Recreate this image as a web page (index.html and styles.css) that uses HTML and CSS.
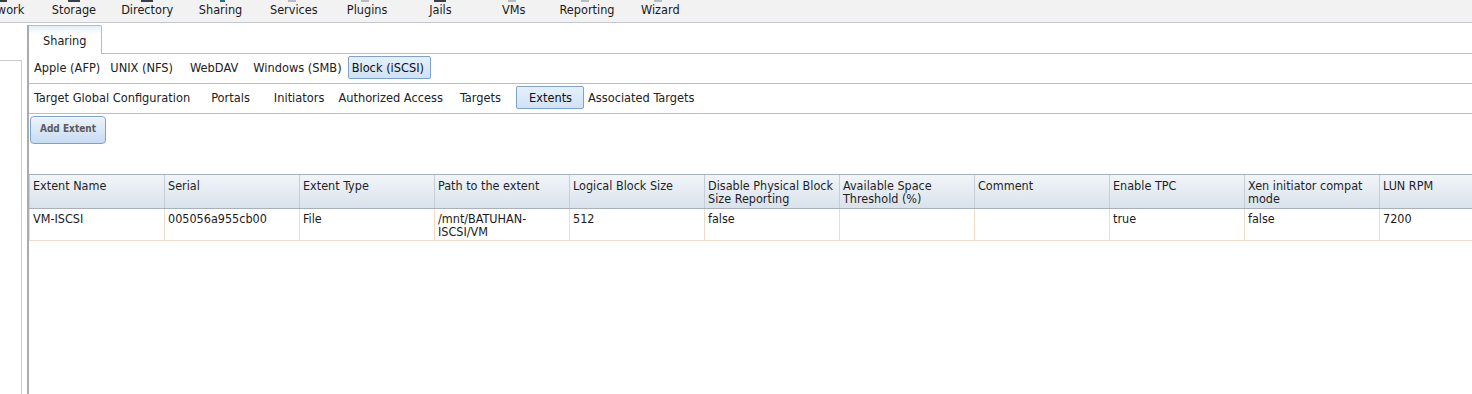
FILE: index.html
```html
<!DOCTYPE html>
<html>
<head>
<meta charset="utf-8">
<link rel="stylesheet" href="styles.css">
</head>
<body>
<div class="topnav">
  <div class="nav-item"><span class="ico ico-dark"></span>Network</div>
  <div class="nav-item"><span class="ico ico-dark"></span>Storage</div>
  <div class="nav-item"><span class="ico ico-dark"></span>Directory</div>
  <div class="nav-item"><span class="ico ico-teal"></span>Sharing</div>
  <div class="nav-item"><span class="ico ico-gray"></span>Services</div>
  <div class="nav-item"><span class="ico ico-gray"></span>Plugins</div>
  <div class="nav-item"><span class="ico ico-dark"></span>Jails</div>
  <div class="nav-item"><span class="ico ico-gray"></span>VMs</div>
  <div class="nav-item"><span class="ico ico-gray"></span>Reporting</div>
  <div class="nav-item"><span class="ico ico-gray"></span>Wizard</div>
</div>
<div class="layout">
  <div class="leftpane"></div>
  <div class="main">
    <div class="tabrow">
      <div class="tab">Sharing</div>
      <div class="tabfill"></div>
    </div>
    <div class="subrow">
      <span class="sub a1">Apple (AFP)</span>
      <span class="sub a2">UNIX (NFS)</span>
      <span class="sub a3">WebDAV</span>
      <span class="sub a4">Windows (SMB)</span>
      <span class="sub sel a5">Block (iSCSI)</span>
    </div>
    <div class="subrow">
      <span class="sub sp1">Target Global Configuration</span>
      <span class="sub sp2">Portals</span>
      <span class="sub sp3">Initiators</span>
      <span class="sub sp4">Authorized Access</span>
      <span class="sub sp5">Targets</span>
      <span class="sub sel sp6">Extents</span>
      <span class="sub">Associated Targets</span>
    </div>
    <div class="toolbar">
      <button class="btn">Add Extent</button>
    </div>
    <div class="grid">
      <div class="grow ghead">
        <div class="gc">Extent Name</div>
        <div class="gc">Serial</div>
        <div class="gc">Extent Type</div>
        <div class="gc">Path to the extent</div>
        <div class="gc">Logical Block Size</div>
        <div class="gc">Disable Physical Block Size Reporting</div>
        <div class="gc">Available Space Threshold (%)</div>
        <div class="gc">Comment</div>
        <div class="gc">Enable TPC</div>
        <div class="gc">Xen initiator compat mode</div>
        <div class="gc">LUN RPM</div>
      </div>
      <div class="grow gbody">
        <div class="gc">VM-ISCSI</div>
        <div class="gc">005056a955cb00</div>
        <div class="gc">File</div>
        <div class="gc">/mnt/BATUHAN-ISCSI/VM</div>
        <div class="gc">512</div>
        <div class="gc">false</div>
        <div class="gc"></div>
        <div class="gc"></div>
        <div class="gc">true</div>
        <div class="gc">false</div>
        <div class="gc">7200</div>
      </div>
    </div>
  </div>
</div>
</body>
</html>
```
FILE: styles.css
```css
html, body {
  margin: 0;
  padding: 0;
  background: #ffffff;
  overflow: hidden;
  height: 394px;
  font-family: "DejaVu Sans Condensed", "DejaVu Sans", sans-serif;
  color: #1a1a1a;
}

.topnav {
  display: flex;
  background: #f2f2f2;
  border-bottom: 1px solid #c4c8cc;
  margin-left: -36px;
  box-sizing: border-box;
  height: 23px;
}

.nav-item {
  position: relative;
  width: 73.3px;
  flex: none;
  text-align: center;
  font-size: 12.6px;
  line-height: 20px;
  color: #1a1a1a;
}

.ico {
  position: absolute;
  top: 0;
  left: 50%;
  width: 12px;
  height: 2px;
  margin-left: -6px;
}
.ico-dark { background: #3a3f45; }
.ico-teal { background: #2a6f86; width: 5px; margin-left: -1px; }
.ico-gray { background: #b9bcbf; width: 8px; }

.layout {
  display: flex;
  height: 371px;
}

.leftpane {
  width: 21px;
  flex: none;
  margin-top: 37px;
  border-top: 1px solid #c8cbd0;
  border-right: 1px solid #c8cbd0;
}

.main {
  margin-left: 5px;
  flex: 1;
  min-width: 0;
  border-left: 2px solid #a8abb0;
  margin-top: 2px;
}

.tabrow {
  display: flex;
  height: 29px;
}

.tab {
  width: 73px;
  flex: none;
  border: 1px solid #b5bcc7;
  border-left: none;
  border-bottom: none;
  border-radius: 0 2px 0 0;
  background: linear-gradient(#e3eefa 0px, #ffffff 8px, #ffffff 100%);
  font-size: 12.6px;
  line-height: 30px;
  padding-left: 14px;
  box-sizing: border-box;
}

.tabfill {
  flex: 1;
  border-bottom: 1px solid #b5bcc7;
}

.subrow {
  display: flex;
  align-items: center;
  padding-bottom: 2px;
  box-sizing: border-box;
  height: 30px;
  border-bottom: 1px solid #b9bec5;
  padding-left: 1px;
  font-size: 12.7px;
  color: #222;
}

.sub {
  padding: 0 3px;
  line-height: 21px;
  border: 1px solid transparent;
  white-space: nowrap;
  flex: none;
}

.sub.sel {
  background: linear-gradient(#e6f0fb, #cfe2f6);
  border: 1px solid #7fa3c6;
  border-radius: 2px;
  color: #111;
}

.subrow .a1 { margin-right: 2px; }
.subrow .a2 { margin-right: 9px; }
.subrow .a3 { margin-right: 7px; }
.subrow .a4 { margin-right: 2px; }
.subrow .sel.a5 { padding: 0 6px 0 3px; }

.subrow .sp1 { margin-right: 13px; }
.subrow .sp2 { margin-right: 16px; }
.subrow .sp3 { margin-right: 6px; }
.subrow .sp4 { margin-right: 9px; }
.subrow .sp5 { margin-right: 11px; }
.subrow .sel.sp6 { padding: 0 12px 0 12px; margin-right: 0; width: 68px; box-sizing: border-box; }

.toolbar {
  height: 60px;
  padding: 2px 0 0 1px;
  box-sizing: border-box;
}

.btn {
  width: 76px;
  height: 28px;
  border: 1px solid #7ea3c9;
  border-radius: 4px;
  background: linear-gradient(#ecf3fb, #c7dbf1);
  font-family: "DejaVu Sans Condensed", "DejaVu Sans", sans-serif;
  font-size: 10px;
  font-weight: bold;
  color: #5a5a5a;
  padding: 0 0 3px 0;
  box-shadow: inset 0 1px 0 #ffffff;
}

.grid {
  width: 1485px;
  border-top: 1px solid #a9b0b8;
}

.grow {
  display: flex;
}

.gc {
  width: 135px;
  flex: none;
  box-sizing: border-box;
  padding: 4px 3px 2px 3px;
  font-size: 12.5px;
  line-height: 13px;
  word-break: break-word;
}

.ghead {
  height: 33px;
  background: linear-gradient(#f1f5f9, #d9e2ec);
  border-bottom: 1px solid #a9b0b8;
  color: #1f1f1f;
}

.ghead .gc {
  border-left: 1px solid #c6ced7;
}

.gbody {
  height: 31px;
  border-bottom: 1px solid #f0dcc6;
  background: #ffffff;
}

.gbody .gc {
  border-left: 1px solid #f0dcc6;
  padding-top: 3px;
}
```
